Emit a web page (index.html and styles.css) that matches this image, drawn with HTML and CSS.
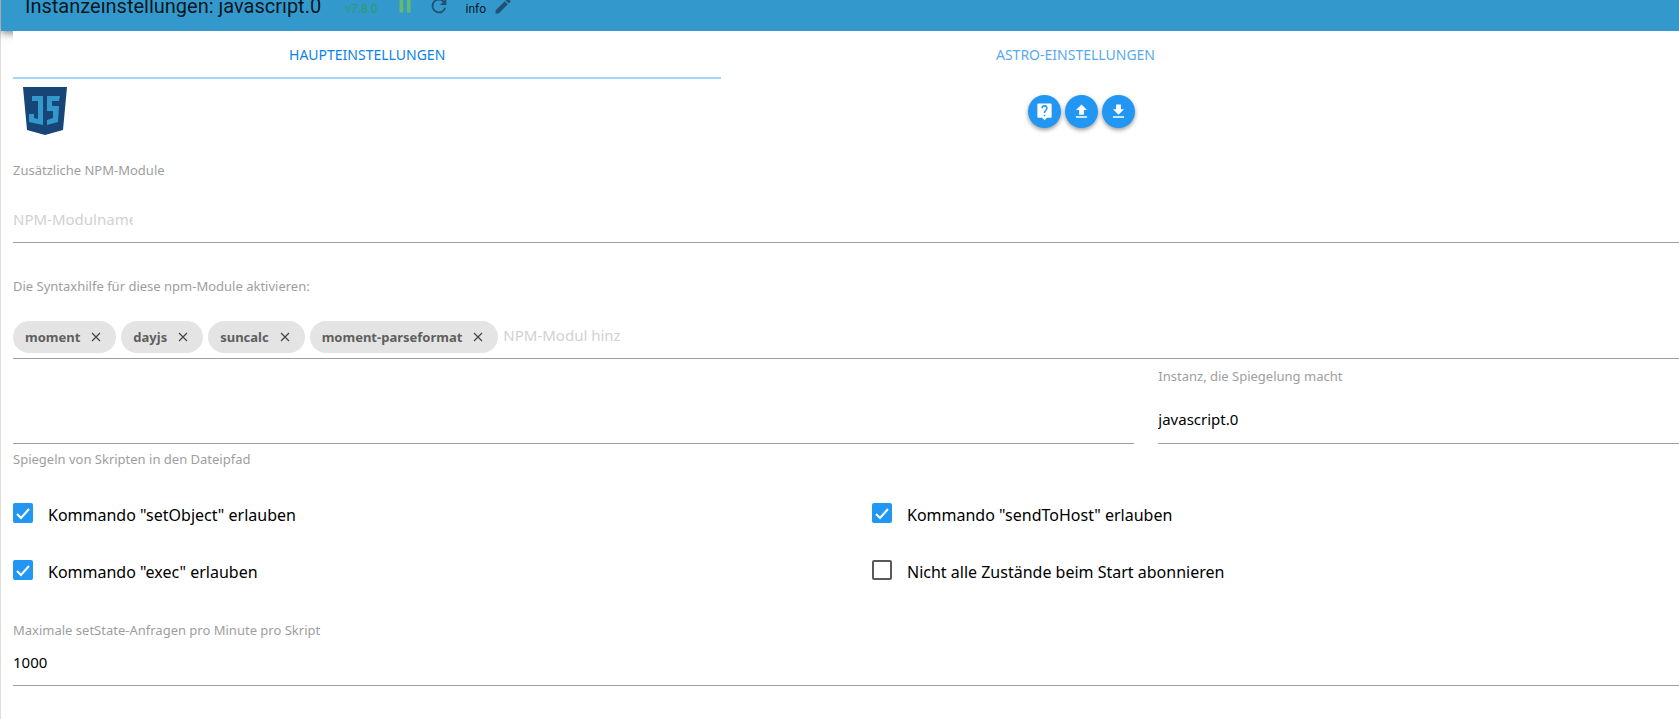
FILE: index.html
```html
<!DOCTYPE html>
<html lang="de">
<head>
<meta charset="utf-8">
<meta name="viewport" content="width=device-width, initial-scale=1">
<title>Instanzeinstellungen: javascript.0</title>
<link rel="stylesheet" href="styles.css">
</head>
<body>
<div class="app">
  <header class="toolbar">
    <h1 class="title">Instanzeinstellungen: javascript.0</h1>
    <span class="version">v7.8.0</span>
    <button class="tool" type="button" aria-label="Pause"><svg class="icon pause" viewBox="0 0 24 24"><path d="M6 19h4V5H6v14zm8-14v14h4V5h-4z"/></svg></button>
    <button class="tool" type="button" aria-label="Neu starten"><svg class="icon" viewBox="0 0 24 24"><path d="M17.65 6.35A7.96 7.96 0 0 0 12 4a8 8 0 1 0 7.73 10h-2.08A6 6 0 1 1 12 6c1.66 0 3.14.69 4.22 1.78L13 11h7V4l-2.35 2.35z"/></svg></button>
    <button class="tool log-level" type="button" aria-label="Loglevel info"><span>info</span><svg class="icon pencil" viewBox="0 0 24 24"><path d="M3 17.25V21h3.75L17.81 9.94l-3.75-3.75L3 17.25zM20.71 7.04a1 1 0 0 0 0-1.41l-2.34-2.34a1 1 0 0 0-1.41 0l-1.83 1.83 3.75 3.75 1.83-1.83z"/></svg></button>
  </header>
  <main class="content">
    <nav class="tabs">
      <a class="tab active" href="#main">Haupteinstellungen</a>
      <a class="tab" href="#astro">Astro-Einstellungen</a>
    </nav>
    <div class="head-row">
      <svg class="logo" viewBox="0 0 44 48" role="img" aria-label="JavaScript">
        <path fill="#174578" d="M0 0h44l-4 43-18 5-18-5z"/>
        <path fill="#3399cc" d="M9 9h11v29L6 35v-8h5v4l4 1V14H9zM24 9h13l-1 5h-7v5h7l-1 16-11 3v-5l6-2v-7h-6z"/>
      </svg>
      <div class="actions">
        <button class="round" type="button" aria-label="Hilfe"><svg viewBox="0 0 24 24"><path d="M20 2H4a1 1 0 0 0-1 1v16a1 1 0 0 0 1 1h5l3 3 3-3h5a1 1 0 0 0 1-1V3a1 1 0 0 0-1-1zm-7 16h-2v-2h2v2zm2.07-7.75-.9.92C13.45 11.9 13 12.5 13 14h-2v-.5c0-1.1.45-2.1 1.17-2.83l1.24-1.26A2 2 0 1 0 10 8H8a4 4 0 1 1 7.07 2.25z"/></svg></button>
        <button class="round" type="button" aria-label="Hochladen"><svg viewBox="0 0 24 24"><path d="M5 20h14v-2H5v2zM5 10h4v6h6v-6h4l-7-7-7 7z"/></svg></button>
        <button class="round" type="button" aria-label="Herunterladen"><svg viewBox="0 0 24 24"><path d="M19 9h-4V3H9v6H5l7 7 7-7zM5 18v2h14v-2H5z"/></svg></button>
      </div>
    </div>
    <div class="field">
      <label class="label" for="npm">Zusätzliche NPM-Module</label>
      <div class="chips"><input class="chip-input" id="npm" type="text" placeholder="NPM-Modulname"></div>
    </div>
    <div class="field">
      <label class="label" for="types">Die Syntaxhilfe für diese npm-Module aktivieren:</label>
      <div class="chips">
        <span class="chip">moment<button class="close" type="button" aria-label="moment entfernen"><svg viewBox="0 0 10 10"><path d="M1 1l8 8M9 1L1 9"/></svg></button></span>
        <span class="chip">dayjs<button class="close" type="button" aria-label="dayjs entfernen"><svg viewBox="0 0 10 10"><path d="M1 1l8 8M9 1L1 9"/></svg></button></span>
        <span class="chip">suncalc<button class="close" type="button" aria-label="suncalc entfernen"><svg viewBox="0 0 10 10"><path d="M1 1l8 8M9 1L1 9"/></svg></button></span>
        <span class="chip">moment-parseformat<button class="close" type="button" aria-label="moment-parseformat entfernen"><svg viewBox="0 0 10 10"><path d="M1 1l8 8M9 1L1 9"/></svg></button></span>
        <input class="chip-input" id="types" type="text" placeholder="NPM-Modul hinz">
      </div>
    </div>
    <div class="mirror">
      <div class="mirror-path">
        <input class="line-input" id="path" type="text">
        <label class="label" for="path">Spiegeln von Skripten in den Dateipfad</label>
      </div>
      <div class="mirror-instance">
        <label class="label" for="instance">Instanz, die Spiegelung macht</label>
        <select class="line-input select" id="instance"><option>javascript.0</option></select>
      </div>
    </div>
    <div class="checks">
      <label class="check"><input type="checkbox" checked><span>Kommando "setObject" erlauben</span></label>
      <label class="check"><input type="checkbox" checked><span>Kommando "sendToHost" erlauben</span></label>
      <label class="check"><input type="checkbox" checked><span>Kommando "exec" erlauben</span></label>
      <label class="check"><input type="checkbox"><span>Nicht alle Zustände beim Start abonnieren</span></label>
    </div>
    <div class="limit">
      <label class="label" for="max">Maximale setState-Anfragen pro Minute pro Skript</label>
      <input class="line-input" id="max" type="text" value="1000">
    </div>
  </main>
</div>
</body>
</html>
```
FILE: styles.css
```css
* { box-sizing: border-box; }
body {
  margin: 0;
  background: #fff;
  color: #000;
  font-family: "Noto Sans", "Open Sans", sans-serif;
  font-size: 15px;
  overflow: hidden;
}
button, input, select { font: inherit; color: inherit; }
button { border: 0; background: none; padding: 0; }
.app { display: flow-root; min-height: 100vh; border-left: 1px solid #ddd; }

.toolbar {
  display: flex;
  align-items: center;
  height: 52px;
  margin-top: -21px;
  padding: 2px 24px 0;
  background: #3399cc;
  box-shadow: 0 2px 8px rgba(0, 0, 0, .5);
  font-family: Roboto, sans-serif;
  color: rgba(0, 0, 0, .87);
}
.title { margin: 0 24px 0 0; font-size: 20px; font-weight: 400; line-height: 24px; }
.version { margin-right: 16px; padding-top: 5px; font-size: 12px; color: #2e9c68; }
.tool { display: flex; align-items: center; margin-right: 12px; }
.icon { display: block; width: 22px; height: 22px; fill: #205170; }
.pause { fill: #66bb6a; }
.log-level { gap: 7px; margin-left: 4px; font-size: 12px; }
.log-level span { padding-top: 5px; }
.pencil { width: 20px; height: 20px; }

.content {
  position: relative;
  width: calc(100% + 40px);
  padding: 0 12px;
}
.tabs { display: grid; grid-template-columns: 5fr 5fr 2fr; height: 48px; margin-right: -6px; background: #fff; }
.tab {
  display: flex;
  align-items: center;
  justify-content: center;
  border-bottom: 2px solid transparent;
  color: #5aa9ee;
  font-size: 14px;
  text-decoration: none;
  text-transform: uppercase;
}
.tab.active { color: #0d82e8; border-color: #a6d5fa; }

.head-row { display: grid; grid-template-columns: 3fr 2fr; height: 81px; padding: 8px 9px 8px 10px; }
.logo { width: 44px; height: 48px; }
.actions { display: flex; gap: 4px; padding-top: 8px; }
.round {
  display: grid;
  place-items: center;
  width: 33px;
  height: 33px;
  border-radius: 50%;
  background: #2196f3;
  box-shadow: 0 2px 4px rgba(0, 0, 0, .4);
}
.round svg { width: 19px; height: 19px; fill: #fff; }

.label { display: block; color: #9e9e9e; font-size: 13px; line-height: 20px; }
.field { margin-bottom: 33px; }
.field + .field { margin-bottom: 7px; }
.chips {
  display: flex;
  align-items: center;
  gap: 5px;
  margin-top: 25px;
  padding-bottom: 5px;
  border-bottom: 1px solid #9e9e9e;
}
.chip {
  display: flex;
  align-items: center;
  gap: 11px;
  height: 32px;
  padding: 0 15px 0 12px;
  border-radius: 16px;
  background: #e4e4e4;
  color: #5f5f5f;
  font-size: 13px;
  font-weight: 700;
}
.close { display: grid; width: 10px; height: 10px; }
.close svg { width: 10px; height: 10px; stroke: #444; stroke-width: 1.2; fill: none; }
.chip-input { width: 120px; height: 32px; padding: 0 0 4px; border: 0; background: none; outline: 0; }
.chip-input::placeholder { color: #d1d1d1; opacity: 1; }

.line-input {
  display: block;
  width: 100%;
  height: 46px;
  padding: 0 0 2px;
  border: 0;
  border-bottom: 1px solid #9e9e9e;
  border-radius: 0;
  background: none;
  outline: 0;
}
.mirror { display: grid; grid-template-columns: 2fr 1fr; margin: 0 -12px; }
.mirror-path, .mirror-instance { padding: 0 12px; }
.mirror-path { padding-top: 32px; }
.mirror-path .label { margin-top: 5px; }
.select { appearance: none; height: 58px; padding: 8px 0 0; }

.checks { display: grid; grid-template-columns: 1fr 1fr; margin: 15px -12px 22px; }
.check { display: flex; align-items: center; gap: 15px; height: 57px; padding: 0 12px; font-size: 16px; }
.check input {
  appearance: none;
  width: 20px;
  height: 20px;
  margin: 0;
  border: 2px solid #5a5a5a;
  border-radius: 2px;
}
.check input:checked {
  border: 0;
  background: #2196f3 url("data:image/svg+xml,%3Csvg xmlns='http://www.w3.org/2000/svg' viewBox='0 0 20 20'%3E%3Cpath d='M4 11l4 4 8-9' fill='none' stroke='white' stroke-width='2'/%3E%3C/svg%3E");
}
.check span { padding-top: 4px; }
```
